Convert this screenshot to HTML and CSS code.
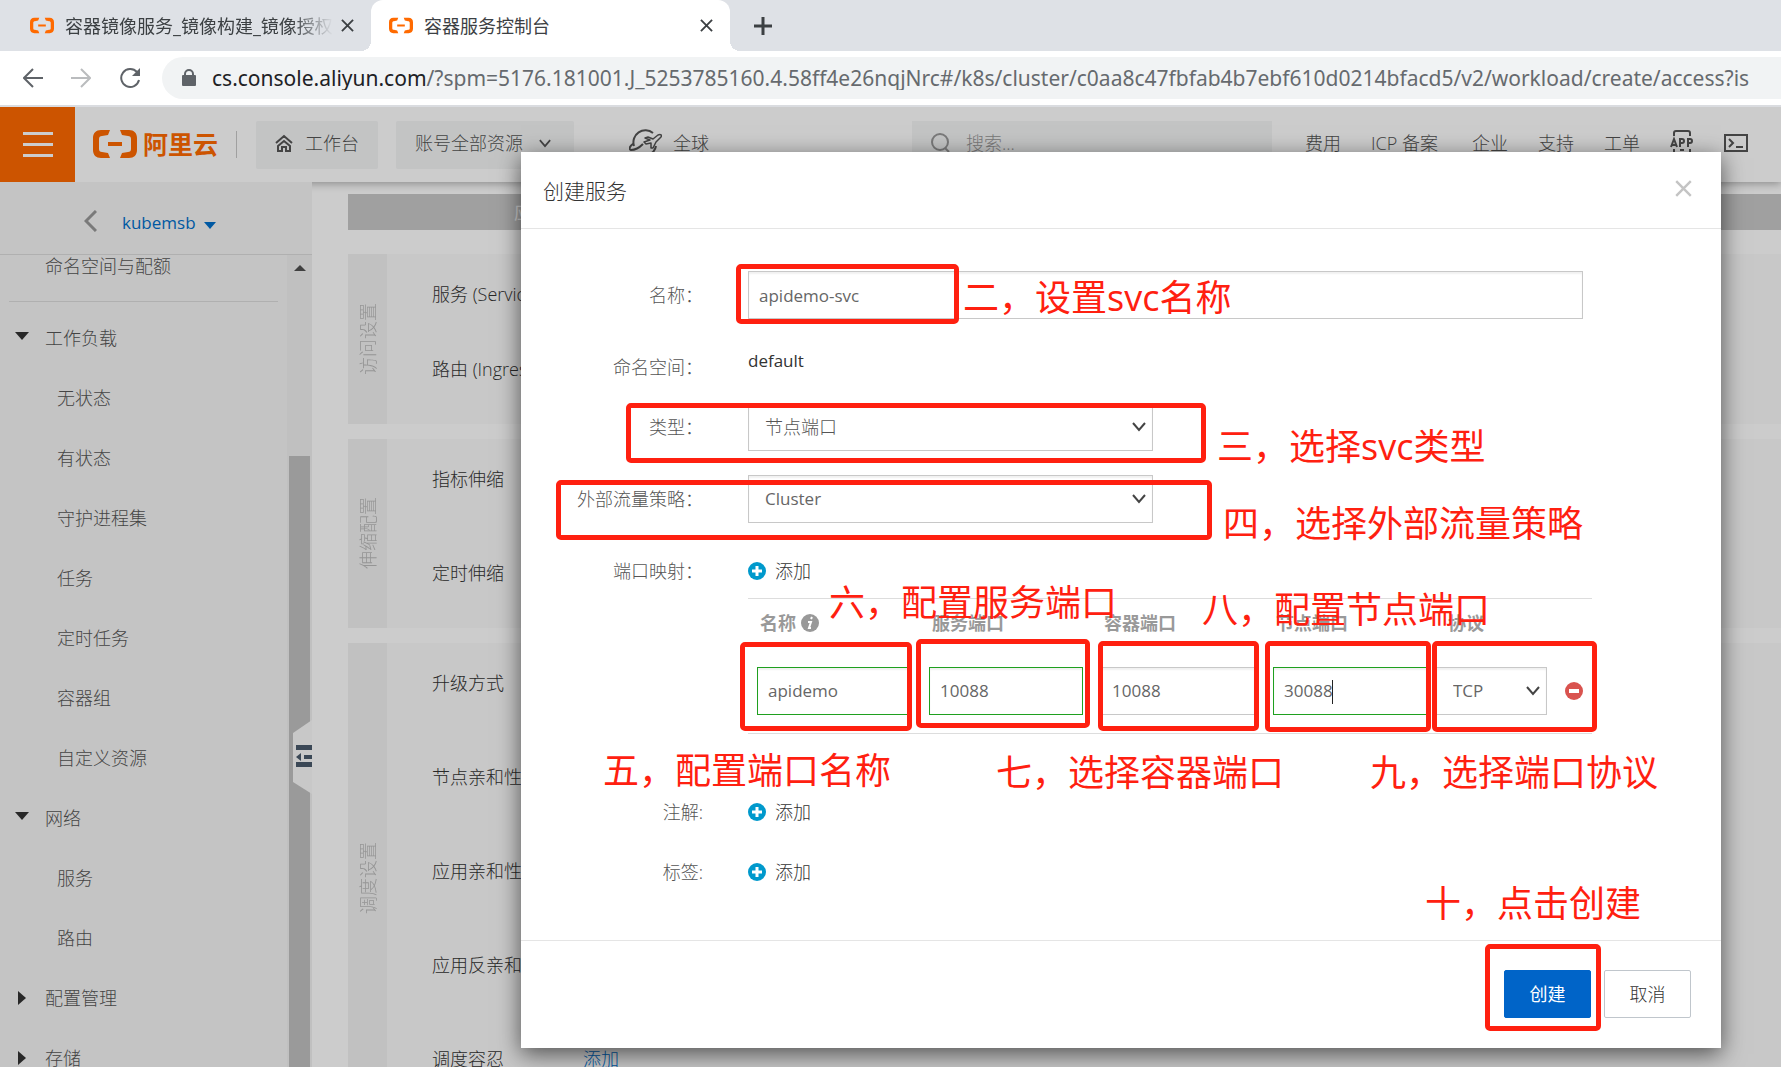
FILE: index.html
```html
<!DOCTYPE html>
<html lang="zh-CN">
<head>
<meta charset="utf-8">
<title>容器服务控制台</title>
<link rel="stylesheet" href="styles.css">
</head>
<body>
<svg class="defs" width="0" height="0" aria-hidden="true">
  <symbol id="brand" viewBox="0 0 44 28">
    <path d="M17 0H8C3 0 0 3 0 8v12c0 5 3 8 8 8h9l-2-5-6-1c-2 0-3-1-3-3V9c0-2 1-3 3-3l6-1zM27 0h9c5 0 8 3 8 8v12c0 5-3 8-8 8h-9l2-5 6-1c2 0 3-1 3-3V9c0-2-1-3-3-3l-6-1zM15 12h14v4H15z"/>
  </symbol>
  <symbol id="cross" viewBox="0 0 14 14"><path d="M1 1l12 12M13 1L1 13" fill="none" stroke="currentColor" stroke-width="2"/></symbol>
  <symbol id="down" viewBox="0 0 14 10"><path d="M1 1l6 7 6-7" fill="none" stroke="currentColor" stroke-width="2"/></symbol>
  <symbol id="plus" viewBox="0 0 18 18"><circle cx="9" cy="9" r="9" fill="#0099cc"/><path d="M9 4v10M4 9h10" stroke="#fff" stroke-width="3"/></symbol>
</svg>

<div class="tabs">
  <div class="tab">
    <svg class="favicon"><use href="#brand"/></svg>
    <span class="tab-title fade">容器镜像服务_镜像构建_镜像授权</span>
    <button class="tab-close" aria-label="关闭"><svg width="13" height="13"><use href="#cross"/></svg></button>
  </div>
  <div class="tab active">
    <svg class="favicon"><use href="#brand"/></svg>
    <span class="tab-title">容器服务控制台</span>
    <button class="tab-close" aria-label="关闭"><svg width="13" height="13"><use href="#cross"/></svg></button>
  </div>
  <button class="tab-new" aria-label="新标签页"><svg width="18" height="18" viewBox="0 0 18 18"><path d="M9 0v18M0 9h18" stroke="currentColor" stroke-width="3"/></svg></button>
</div>

<div class="toolbar">
  <button class="nav" aria-label="后退"><svg width="20" height="20" viewBox="0 0 20 20"><path d="M20 10H2M10 1l-9 9 9 9"/></svg></button>
  <button class="nav off" aria-label="前进"><svg width="20" height="20" viewBox="0 0 20 20"><path d="M0 10h18M10 1l9 9-9 9"/></svg></button>
  <button class="nav" aria-label="刷新"><svg width="22" height="22" viewBox="0 0 22 22"><path d="M18 5a9 9 0 1 0 2 8"/><path d="M21 1v8h-8z" fill="currentColor" stroke="none"/></svg></button>
  <div class="address">
    <svg width="14" height="18" viewBox="0 0 14 18"><path d="M3 7V5a4 4 0 0 1 8 0v2" fill="none" stroke="#5f6368" stroke-width="2"/><rect y="6" width="14" height="11" rx="1" fill="#5f6368"/></svg>
    <span class="url"><b>cs.console.aliyun.com</b>/?spm=5176.181001.J_5253785160.4.58ff4e26nqjNrc#/k8s/cluster/c0aa8c47fbfab4b7ebf610d0214bfacd5/v2/workload/create/access?is</span>
  </div>
</div>

<div class="console">
  <header class="top">
    <button class="burger" aria-label="菜单"><i></i><i></i><i></i></button>
    <a class="logo" href="#"><svg width="44" height="28"><use href="#brand"/></svg><span>阿里云</span></a>
    <span class="sep"></span>
    <button class="chip home"><svg width="18" height="18" viewBox="0 0 18 18"><path d="M1 9l8-7 8 7M3 12l6-5 6 5v5h-4v-4H7v4H3z" fill="none" stroke="currentColor" stroke-width="2"/></svg>工作台</button>
    <button class="chip">账号全部资源<svg width="12" height="9"><use href="#down"/></svg></button>
    <button class="region"><svg width="33" height="28" viewBox="0 0 33 28" fill="none" stroke="currentColor" stroke-width="2"><path d="M24 4A12 12 0 0 0 5 17M27 17A12 12 0 0 1 9 25M5 14c-4 3-6 6-3 7 4 0 8-2 12-6"/><path d="M16 9l3-1 5 2 5-4c3-1 4 0 3 2l-5 5-3 6h-2l0-5-5 1-2-2 6-2z" stroke-width="1.5" stroke-linejoin="round"/></svg>全球</button>
    <label class="search"><svg width="20" height="20" viewBox="0 0 20 20"><circle cx="9" cy="9" r="8" fill="none" stroke="currentColor" stroke-width="2"/><path d="M14 15l4 4" stroke="currentColor" stroke-width="2"/></svg><input type="text" placeholder="搜索..." aria-label="搜索"></label>
    <nav class="menu">
      <a href="#">费用</a><a href="#">ICP 备案</a><a href="#">企业</a><a href="#">支持</a><a href="#">工单</a>
      <svg width="24" height="26" viewBox="0 0 24 26" fill="none" stroke="currentColor" stroke-width="2"><path d="M4 6V3q0-2 2-2h12q2 0 2 2v3M4 19v4q0 2 2 2h12q2 0 2-2v-4M10 20h4"/><path d="M1 17l3-8 3 8M2 15h4M10 17V9h2q2 0 2 2t-2 2h-2M18 17V9h2q2 0 2 2t-2 2h-2"/></svg>
      <svg width="24" height="18" viewBox="0 0 24 18" fill="none" stroke="currentColor" stroke-width="2"><path d="M1 1h22v16H1zM5 5l4 4-4 4M12 13h7"/></svg>
    </nav>
  </header>

  <div class="columns">
    <aside class="side">
      <div class="side-head">
        <svg width="13" height="22" viewBox="0 0 13 22"><path d="M12 1L2 11l10 10" fill="none" stroke="#999" stroke-width="3"/></svg>
        <a href="#">kubemsb</a><i class="caret"></i>
      </div>
      <div class="side-body">
        <ul class="side-list">
          <li class="quota"><a href="#">命名空间与配额</a></li>
          <li class="group open"><a href="#">工作负载</a></li>
          <li><a href="#">无状态</a></li>
          <li><a href="#">有状态</a></li>
          <li><a href="#">守护进程集</a></li>
          <li><a href="#">任务</a></li>
          <li><a href="#">定时任务</a></li>
          <li><a href="#">容器组</a></li>
          <li><a href="#">自定义资源</a></li>
          <li class="group open"><a href="#">网络</a></li>
          <li><a href="#">服务</a></li>
          <li><a href="#">路由</a></li>
          <li class="group"><a href="#">配置管理</a></li>
          <li class="group"><a href="#">存储</a></li>
        </ul>
        <div class="scroll"><i class="scroll-up"></i><i class="scroll-thumb"></i></div>
      </div>
      <svg class="fold" width="19" height="74" viewBox="0 0 19 74"><path d="M19 0L0 13v49l19 12z" fill="#fafafa"/><path d="M3 25h16v5H3zM11 35h8v4h-8zM3 42h16v5H3zM3 37l5-4v8z" fill="#4a5a6c"/></svg>
    </aside>

    <main class="main">
      <div class="steps"><span>应用基本信息</span></div>
      <section class="panel">
        <h2>访问设置</h2>
        <dl class="rows compact"><dt>服务 (Service)</dt><dt>路由 (Ingress)</dt></dl>
      </section>
      <section class="panel">
        <h2>伸缩配置</h2>
        <dl class="rows"><dt>指标伸缩</dt><dt>定时伸缩</dt></dl>
      </section>
      <section class="panel">
        <h2>调度设置</h2>
        <dl class="rows"><dt>升级方式</dt><dt>节点亲和性</dt><dt>应用亲和性</dt><dt>应用反亲和性</dt><dt>调度容忍<a href="#">添加</a></dt></dl>
      </section>
    </main>
  </div>

  <div class="mask"></div>

  <div class="dialog" role="dialog" aria-labelledby="dialog-title">
    <div class="dialog-head">
      <h1 id="dialog-title">创建服务</h1>
      <button aria-label="关闭"><svg width="17" height="17"><use href="#cross"/></svg></button>
    </div>
    <form class="form">
      <label class="name" for="svc-name">名称：</label>
      <input class="box wide" id="svc-name" type="text" value="apidemo-svc">

      <span class="name">命名空间：</span>
      <span class="static">default</span>

      <label class="name" for="svc-type">类型：</label>
      <span class="select"><select class="box" id="svc-type"><option>节点端口</option></select><svg width="14" height="10"><use href="#down"/></svg></span>

      <label class="name" for="svc-policy">外部流量策略：</label>
      <span class="select"><select class="box latin" id="svc-policy"><option>Cluster</option></select><svg width="14" height="10"><use href="#down"/></svg></span>

      <span class="name">端口映射：</span>
      <div class="ports">
        <button type="button" class="add"><svg width="18" height="18"><use href="#plus"/></svg>添加</button>
        <table>
          <thead><tr>
            <th>名称<svg class="info" width="18" height="18" viewBox="0 0 18 18"><circle cx="9" cy="9" r="9" fill="#999"/><path d="M11 3L10 5M7 8h3l-2 6h2" fill="none" stroke="#fff" stroke-width="2"/></svg></th>
            <th>服务端口</th><th>容器端口</th><th>节点端口</th><th class="proto">协议</th><th class="del"></th>
          </tr></thead>
          <tbody><tr>
            <td><input class="box ok" type="text" value="apidemo" aria-label="名称"></td>
            <td><input class="box ok" type="text" value="10088" aria-label="服务端口"></td>
            <td><input class="box" type="text" value="10088" aria-label="容器端口"></td>
            <td class="typing"><input class="box ok" type="text" value="30088" aria-label="节点端口"></td>
            <td class="proto"><span class="select"><select class="box latin" aria-label="协议"><option>TCP</option></select><svg width="14" height="10"><use href="#down"/></svg></span></td>
            <td class="del"><button type="button" aria-label="删除"><svg width="18" height="18" viewBox="0 0 18 18"><circle cx="9" cy="9" r="9" fill="#d9534f"/><path d="M4 9h10" stroke="#fff" stroke-width="4"/></svg></button></td>
          </tr></tbody>
        </table>
      </div>

      <span class="name">注解:</span>
      <button type="button" class="add"><svg width="18" height="18"><use href="#plus"/></svg>添加</button>

      <span class="name">标签:</span>
      <button type="button" class="add"><svg width="18" height="18"><use href="#plus"/></svg>添加</button>
    </form>
    <div class="dialog-foot">
      <button class="btn primary">创建</button>
      <button class="btn">取消</button>
    </div>

    <i class="mark m-name"></i><i class="mark m-type"></i><i class="mark m-policy"></i>
    <i class="mark m-p1"></i><i class="mark m-p2"></i><i class="mark m-p3"></i><i class="mark m-p4"></i><i class="mark m-p5"></i>
    <i class="mark m-create"></i>
    <p class="note n2">二，设置svc名称</p>
    <p class="note n3">三，选择svc类型</p>
    <p class="note n4">四，选择外部流量策略</p>
    <p class="note n5">五，配置端口名称</p>
    <p class="note n6">六，配置服务端口</p>
    <p class="note n7">七，选择容器端口</p>
    <p class="note n8">八，配置节点端口</p>
    <p class="note n9">九，选择端口协议</p>
    <p class="note n10">十，点击创建</p>
  </div>
</div>
</body>
</html>
```
FILE: styles.css
```css
* { box-sizing: border-box; }
body {
  margin: 0;
  height: 100vh;
  display: flex;
  flex-direction: column;
  overflow: hidden;
  background: #fff;
  color: #333;
  font: 300 18px/24px "Open Sans", "Noto Sans CJK SC", sans-serif;
}
button, input, select { font: inherit; color: inherit; }
button { border: 0; padding: 0; background: none; }
a { color: inherit; text-decoration: none; }
svg { display: block; flex: none; }
ul, dl, p, h1, h2 { margin: 0; padding: 0; font-weight: inherit; }
ul { list-style: none; }
.defs { position: absolute; }

/* browser tabs */
.tabs { display: flex; flex: none; height: 51px; background: #dee1e6; color: #3c4043; font-weight: 400; }
.tab { display: flex; align-items: center; width: 371px; padding: 0 16px 0 30px; }
.tab.active { position: relative; width: 359px; padding: 0 16px 0 18px; background: #fff; border-radius: 12px 12px 0 0; }
.tab.active::before, .tab.active::after {
  content: ""; position: absolute; bottom: 0; width: 10px; height: 10px;
}
.tab.active::before { left: -10px; background: radial-gradient(circle at 0 0, #dee1e6 10px, #fff 10px); }
.tab.active::after { right: -10px; background: radial-gradient(circle at 100% 0, #dee1e6 10px, #fff 10px); }
.favicon { width: 24px; height: 17px; fill: #ff6a00; }
.tab-title { flex: 1; margin: 0 7px 0 11px; overflow: hidden; white-space: nowrap; }
.fade { -webkit-mask-image: linear-gradient(90deg, #000 85%, transparent); mask-image: linear-gradient(90deg, #000 85%, transparent); }
.tab-close { padding: 0 1px; }
.tab-new { margin-left: 24px; }

/* address row */
.toolbar {
  display: flex; flex: none; align-items: center; gap: 28px; height: 56px;
  padding-left: 23px; border-bottom: 2px solid #dadce0;
}
.nav svg { fill: none; stroke: currentColor; stroke-width: 2; }
.nav { color: #5f6368; }
.nav.off { color: #babcbe; }
.address {
  display: flex; flex: 1; align-items: center; gap: 16px; min-width: 0; height: 42px;
  margin-left: -7px; padding-left: 20px; background: #f1f3f4; border-radius: 21px 0 0 21px;
}
.url { overflow: hidden; white-space: nowrap; font-family: "Noto Sans", "Open Sans", sans-serif; font-size: 21px; font-weight: 400; color: #666a6e; }
.url b { font-weight: 400; color: #202124; }

/* console header */
.console { position: relative; display: flex; flex: 1; flex-direction: column; min-height: 0; overflow: hidden; }
.top {
  position: relative; display: flex; flex: none; align-items: flex-start; height: 75px;
  background: #fff; box-shadow: 0 2px 8px rgba(0, 0, 0, .3);
}
.burger { display: flex; flex-direction: column; justify-content: center; align-items: center; gap: 8px; width: 75px; height: 75px; background: #ff6a00; }
.burger i { width: 30px; height: 3px; background: #fff; }
.logo { display: flex; align-items: center; gap: 6px; height: 74px; margin-left: 18px; color: #ff6a00; font-size: 25px; font-weight: 700; }
.logo svg { fill: #ff6a00; }
.sep { width: 1px; height: 27px; margin: 24px 19px 0 18px; background: #c8c8c8; }
.chip, .region, .search { display: flex; align-items: center; height: 48px; margin-top: 14px; padding-bottom: 4px; }
.chip { gap: 16px; margin-right: 18px; padding-left: 19px; padding-right: 23px; border-radius: 2px; background: #f4f5f6; color: #555; }
.home { gap: 12px; padding-right: 19px; }
.region { gap: 11px; margin-left: 37px; color: #555; }
.search { gap: 15px; width: 360px; margin-right: 33px; margin-left: 203px; padding-left: 19px; background: #f4f5f6; color: #999; }
.search input { flex: 1; min-width: 0; border: 0; padding: 0; background: none; }
.search input::placeholder { color: #999; }
.menu { display: flex; align-items: center; gap: 30px; height: 72px; white-space: nowrap; color: #555; }
.menu a:nth-child(2) { width: 71px; }

/* sidebar */
.columns { display: flex; flex: 1; min-height: 0; }
.side { position: relative; display: flex; flex: none; flex-direction: column; width: 312px; background: #f5f5f5; }
.side-head { display: flex; flex: none; align-items: center; height: 73px; padding: 10px 0 0 84px; border-bottom: 1px solid #dcdcdc; color: #0070cc; font-size: 17px; font-weight: 400; }
.side-head svg { margin: -4px 25px 0 0; }
.caret { margin: 4px 0 0 8px; border: 6px solid transparent; border-top: 7px solid #0070cc; border-bottom: 0; }
.side-body { display: flex; flex: 1; min-height: 0; }
.side-list { flex: 1; overflow: hidden; color: #555; }
.side-list li { display: flex; align-items: center; height: 60px; padding-left: 57px; }
.side-list .group { padding-left: 18px; }
.side-list .group::before { content: ""; margin-right: 19px; border: 7px solid transparent; border-left: 8px solid #333; border-right: 0; }
.side-list .open { padding-left: 15px; }
.side-list .open::before { margin: -4px 16px 0 0; border: 7px solid transparent; border-top: 8px solid #333; border-bottom: 0; }
.side-list .quota { height: 47px; margin: 0 9px 6px; padding: 0 0 25px 36px; border-bottom: 1px solid #dcdcdc; }
.scroll { flex: none; width: 25px; padding-top: 10px; background: #f1f1f1; }
.scroll i { display: block; }
.scroll-up { width: 0; margin: 0 auto; border: 6px solid transparent; border-top: 0; border-bottom: 6px solid #505050; }
.scroll-thumb { width: 21px; height: 100%; margin: 185px auto 0; background: #c1c1c1; }
.fold { position: absolute; right: 0; top: 538px; }

/* page body */
.main { flex: 1; min-width: 0; padding: 12px 0 0 36px; }
.steps { height: 36px; padding: 6px 0 0 166px; background: #c9c9c9; color: #fff; font-weight: 400; }
.panel { display: flex; margin-top: 15px; padding-bottom: 1px; background: #fafafa; }
.steps + .panel { margin-top: 24px; }
.panel h2 { display: flex; justify-content: center; align-items: center; width: 39px; margin-bottom: -1px; background: #f2f2f2; color: #bbb; font-size: 18px; writing-mode: vertical-rl; text-orientation: sideways; transform: rotate(180deg); }
.rows { flex: 1; padding-left: 45px; }
.rows dt { display: flex; height: 94px; padding-top: 28px; }
.rows.compact dt:first-child { height: 75px; }
.rows a { margin-left: 79px; color: #0070cc; }

.mask { position: absolute; inset: 0; background: rgba(0, 0, 0, .2); }

/* dialog */
.dialog { position: absolute; top: 45px; left: 521px; right: 60px; background: #fff; box-shadow: 0 6px 22px rgba(0, 0, 0, .6); }
.dialog-head { display: flex; justify-content: space-between; align-items: center; height: 77px; padding: 2px 29px 0 22px; border-bottom: 1px solid #e5e5e5; }
.dialog-head h1 { font-size: 21px; }
.dialog-head button { margin-top: -6px; color: #c4c4c4; }
.form { display: grid; grid-template-columns: 182px 1fr; gap: 24px 45px; align-items: start; padding: 42px 129px 56px 0; }
.name { padding-top: 12px; text-align: right; white-space: nowrap; color: #555; }
.box {
  width: 100%; height: 48px; padding: 0 10px; border: 1px solid #c8c8c8; border-radius: 0; outline: 0;
  background: #fff; color: #555; box-shadow: inset 0 2px 2px rgba(0, 0, 0, .06); appearance: none;
}
.wide { width: calc(100% - 9px); }
input.box, .latin, .static { font-size: 17px; font-weight: 400; }
input.box, .latin { color: #666; }
.ok { border-color: #1fa01f; }
.static { padding-top: 6px; }
.select { position: relative; display: block; width: 405px; }
.select .box { padding: 0 16px; }
.select svg { position: absolute; right: 7px; top: 19px; color: #444; }
.add { display: flex; align-items: center; gap: 9px; height: 24px; margin-top: 12px; }
.ports { padding-bottom: 30px; }
table { width: 100%; margin-top: 15px; border-collapse: collapse; table-layout: fixed; border-bottom: 1px solid #ddd; border-top: 1px solid #ddd; }
th { height: 50px; padding: 0 12px 2px; text-align: left; font-weight: 700; color: #999; }
.info { display: inline-block; margin-left: 5px; vertical-align: -2px; }
td { height: 85px; padding: 0 9px; }
.proto { width: 111px; }
td.proto, td.del { padding: 0; }
td.proto .select { width: 100%; }
.del { width: 45px; }
td.del button { display: block; margin-left: 18px; }
.typing { position: relative; }
.typing::after { content: ""; position: absolute; left: 68px; top: 31px; width: 1px; height: 24px; background: #222; }
.dialog-foot { display: flex; justify-content: flex-end; gap: 13px; padding: 29px 30px 30px; border-top: 1px solid #e5e5e5; }
.btn { width: 87px; height: 48px; border: 1px solid #c0c6cc; border-radius: 2px; background: #fff; }
.primary { border-color: #0064c8; background: #0064c8; color: #fff; font-weight: 400; }

/* annotations drawn over the dialog */
.mark { position: absolute; border: 5px solid #ff2010; border-radius: 5px; pointer-events: none; }
.m-name { left: 215px; top: 112px; width: 223px; height: 60px; }
.m-type { left: 105px; top: 251px; width: 580px; height: 60px; }
.m-policy { left: 35px; top: 328px; width: 656px; height: 60px; }
.m-p1 { left: 219px; top: 490px; width: 172px; height: 89px; }
.m-p2 { left: 395px; top: 487px; width: 174px; height: 89px; }
.m-p3 { left: 577px; top: 489px; width: 161px; height: 90px; }
.m-p4 { left: 744px; top: 489px; width: 166px; height: 91px; }
.m-p5 { left: 911px; top: 489px; width: 165px; height: 91px; }
.m-create { left: 964px; top: 792px; width: 116px; height: 87px; }
.note { position: absolute; font-size: 36px; line-height: 48px; font-weight: 400; color: #ff2010; white-space: nowrap; pointer-events: none; }
.n2 { left: 442px; top: 122px; }
.n3 { left: 696px; top: 271px; }
.n4 { left: 702px; top: 348px; }
.n5 { left: 82px; top: 595px; }
.n6 { left: 308px; top: 427px; }
.n7 { left: 475px; top: 597px; }
.n8 { left: 681px; top: 434px; }
.n9 { left: 849px; top: 597px; }
.n10 { left: 904px; top: 728px; }
```
